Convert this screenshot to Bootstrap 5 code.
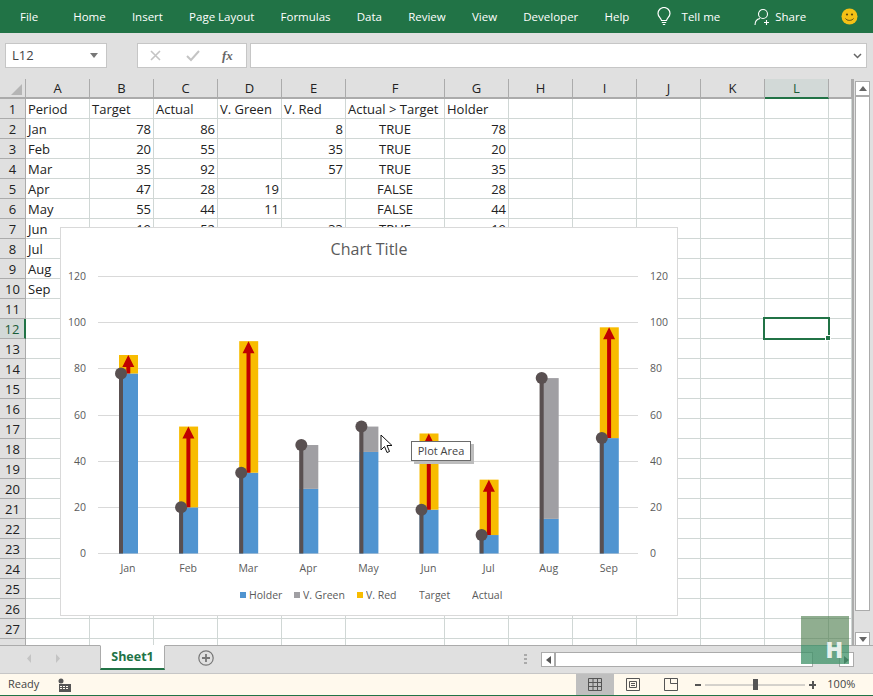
<!DOCTYPE html>
<html lang="en">
<head>
  <meta charset="UTF-8">
  <title>Excel chart</title>
  <link href="https://cdn.jsdelivr.net/npm/bootstrap@5.3.3/dist/css/bootstrap.min.css" rel="stylesheet">
  <style>
    html, body { height: 100%; }
    body { font-family: "Open Sans", "Liberation Sans", sans-serif; background: #e0e0e0; overflow: hidden; color: #222; }
    .xl-app { position: relative; width: 873px; height: 696px; }
    .xl-ribbon { height: 33px; background: #217346; color: #fff; font-size: 11.5px; padding-left: 20px; }
    .xl-ribbon span { white-space: nowrap; }
    .xl-tab { margin-right: 26.2px; }
    .xl-tab-file { margin-right: 35px; }
    .xl-tell { margin-left: 10px; margin-right: 34px; }
    .xl-smile { margin-right: 15px; }
    .xl-formula { height: 46px; background: #e0e0e0; padding: 10px 6px 11px 5px; }
    .xl-box { background: #fff; border: 1px solid #c6c6c6; height: 25px; }
    .xl-name { width: 102px; font-size: 13px; color: #444; padding-left: 6px; }
    .xl-fx { width: 110px; margin-left: 30px; margin-right: 3px; }
    .xl-sheet { height: 566px; position: relative; background: #fff; overflow: hidden; }
    .xl-grid { border-collapse: separate; border-spacing: 0; table-layout: fixed; width: 852px; font-size: 13px; margin: 0; }
    .xl-grid th, .xl-grid td { height: 20px; padding: 1px 2px 0; border-right: 1px solid #d0d7d5; border-bottom: 1px solid #d0d7d5; font-weight: 400; line-height: 18px; white-space: nowrap; overflow: hidden; color: #222; }
    .xl-grid thead th { background: #e0e0e0; text-align: center; border-right-color: #ababab; border-bottom: 2px solid #ababab; line-height: 17px; }
    .xl-grid tbody th { background: #e0e0e0; text-align: center; border-right: 1px solid #ababab; border-bottom-color: #ababab; padding: 1px 0 0; }
    .xl-grid thead th.xl-on { background: #d2d9d7; border-bottom-color: #217346; color: #1a5c38; }
    .xl-grid tbody th.xl-on { background: #d2d9d7; border-right: 2px solid #217346; color: #1a5c38; }
    .xl-grid thead th.xl-corner { position: relative; }
    .xl-corner svg { position: absolute; right: 3px; bottom: 2px; }
    .xl-mid { text-align: center; }
    .xl-num { text-align: right; }
    .xl-filler { position: absolute; top: 0; right: 0; bottom: 0; width: 21px; background: #e0e0e0; border-left: 2px solid #ababab; }
    .xl-selected { position: absolute; left: 763px; top: 238px; width: 67px; height: 23px; border: 2px solid #217346; }
    .xl-selected::after { content: ""; position: absolute; right: -3px; bottom: -3px; width: 6px; height: 6px; background: #217346; border: 1px solid #fff; }
    .xl-chart { position: absolute; left: 60px; top: 148px; width: 618px; height: 389px; background: #fff; border: 1px solid #d9d9d9; }
    .xl-chart svg { display: block; }
    .xl-chart text { font-family: "Open Sans", "Liberation Sans", sans-serif; font-size: 10.5px; fill: #595959; opacity: .99; }
    .xl-tip { position: absolute; left: 411px; top: 362px; width: 60px; height: 20px; background: #fff; border: 1px solid #6b6b6b; box-shadow: 3px 3px 0 #bdbdbd; font-size: 11px; line-height: 18px; text-align: center; color: #444; }
    .xl-pointer { position: absolute; left: 380px; top: 355px; }
    .xl-scroll { position: absolute; left: 855px; top: 2px; width: 15px; }
    .xl-scroll-btn { height: 15px; background: #fff; border: 1px solid #ababab; }
    .xl-scroll-thumb { height: 515px; background: #fff; border: 1px solid #ababab; }
    .xl-scroll-down { margin-top: 21px; height: 14px; }
    .xl-tabs { height: 29px; background: #e0e0e0; border-top: 1px solid #ababab; border-bottom: 1px solid #c6c6c6; font-size: 12.5px; }
    .xl-sheet-tab { width: 65px; height: 25px; margin-left: 36px; margin-top: -1px; background: #fff; border: 1px solid #ababab; border-top-color: #fff; border-bottom: 2px solid #217346; color: #217346; font-weight: 700; text-align: center; line-height: 22px; }
    .xl-add { margin-left: 33px; }
    .xl-dots { position: absolute; left: 524px; top: 8px; }
    .xl-hscroll { position: absolute; left: 541px; top: 6px; width: 272px; height: 15px; background: #fff; border: 1px solid #ababab; }
    .xl-hleft { width: 14px; height: 13px; border-right: 2px solid #ababab; }
    .xl-hright { position: absolute; left: 839px; top: 6px; width: 15px; height: 15px; background: #fff; border: 1px solid #ababab; }
    .xl-status { height: 22px; background: #fff9ed; border-bottom: 1px solid #217346; font-size: 11px; color: #444; padding-left: 8px; }
    .xl-macro { margin-left: 19px; }
    .xl-view { width: 38px; height: 21px; }
    .xl-view.xl-on { background: #bfbfbf; margin-left: 504px; }
    .xl-pct { margin-left: 11px; }
    .xl-mark { position: absolute; left: 801px; top: 616px; width: 48px; height: 48px; background: linear-gradient(rgba(70,120,70,.6) 29px, rgba(61,145,103,.75) 29px); color: rgba(255,255,255,.85); font: 800 23px/1 "Open Sans", sans-serif; text-align: right; padding: 22px 6px 0 0; }
  </style>
</head>
<body>
  <div class="xl-app">
    <div class="xl-ribbon d-flex align-items-center">
      <span class="xl-tab-file">File</span>
      <span class="xl-tab">Home</span>
      <span class="xl-tab">Insert</span>
      <span class="xl-tab">Page Layout</span>
      <span class="xl-tab">Formulas</span>
      <span class="xl-tab">Data</span>
      <span class="xl-tab">Review</span>
      <span class="xl-tab">View</span>
      <span class="xl-tab">Developer</span>
      <span class="xl-tab">Help</span>
      <svg width="16" height="20" viewBox="0 0 16 20" fill="none" stroke="#fff" stroke-width="1.2"><path d="M5.5 13.5C5 11 2 9.8 2 6.5a6 6 0 0 1 12 0c0 3.300-3 4.500-3.500 7z"/><path d="M5.800 15.500h4.400M6.800 17.500h2.400"/></svg>
      <span class="xl-tell">Tell me</span>
      <svg width="17" height="18" viewBox="0 0 17 18" fill="none" stroke="#fff" stroke-width="1.100"><circle cx="9" cy="6" r="4.500"/><path d="M1 17c0-4 2.500-6 5-6.500M12.500 12v5M10 14.500h5"/></svg>
      <span class="ms-1">Share</span>
      <svg class="ms-auto xl-smile" width="17" height="17" viewBox="0 0 17 17"><circle cx="8.500" cy="8.500" r="8" fill="#f5c116"/><circle cx="6" cy="6.500" r="1.100" fill="#5b4a10"/><circle cx="11" cy="6.500" r="1.100" fill="#5b4a10"/><path d="M4.500 10.500c1.500 2.500 6.500 2.500 8 0" fill="none" stroke="#5b4a10"/></svg>
    </div>

    <div class="xl-formula d-flex">
      <div class="xl-box xl-name d-flex align-items-center justify-content-between">L12
        <svg class="me-2" width="8" height="5"><path d="M0 0h8L4 5z" fill="#777"/></svg>
      </div>
      <div class="xl-box xl-fx d-flex align-items-center">
        <svg class="ms-2" width="100" height="14" viewBox="0 0 100 14" fill="none"><path d="M5 2l9 9M14 2l-9 9" stroke="#c4c4c4" stroke-width="1.600"/><path d="M41 7l4 4 8-9" stroke="#c4c4c4" stroke-width="2"/><text x="76" y="11" font-family="Liberation Serif" font-style="italic" font-weight="700" font-size="13" fill="#666">fx</text></svg>
      </div>
      <div class="xl-box flex-grow-1 d-flex align-items-center justify-content-end pe-1">
        <svg width="9" height="6" fill="none"><path d="M1 1l3.500 3.500L8 1" stroke="#666" stroke-width="1.500"/></svg>
      </div>
    </div>

    <div class="xl-sheet">
      <table class="xl-grid">
        <colgroup id="cols"></colgroup>
        <thead><tr id="head"></tr></thead>
        <tbody id="rows"></tbody>
      </table>
      <div class="xl-filler"></div>
      <div class="xl-scroll">
        <div class="xl-scroll-btn d-flex align-items-center justify-content-center"><svg width="8" height="5"><path d="M4 0l4 5H0z" fill="#666"/></svg></div>
        <div class="xl-scroll-thumb"></div>
        <div class="xl-scroll-btn xl-scroll-down d-flex align-items-center justify-content-center"><svg width="8" height="5"><path d="M0 0h8L4 5z" fill="#666"/></svg></div>
      </div>
      <div class="xl-selected"></div>
      <div class="xl-chart"><svg id="chart" width="616" height="387"></svg></div>
      <div class="xl-tip">Plot Area</div>
      <svg class="xl-pointer" width="13" height="21" viewBox="0 0 13 21"><path d="M1 1v15l3.500-3.500 2.500 6 2.500-1-2.500-6h5z" fill="#fff" stroke="#111"/></svg>
    </div>

    <div class="xl-tabs d-flex position-relative">
      <svg class="ms-4 mt-2" width="40" height="10" fill="#c4c4c4"><path d="M7 0v9L3 4.500zM32 0v9l4-4.500z"/></svg>
      <div class="xl-sheet-tab">Sheet1</div>
      <svg class="xl-add mt-1" width="16" height="16" fill="none" stroke="#777" stroke-width="1.200"><circle cx="8" cy="8" r="7.200"/><path d="M8 4v8M4 8h8" stroke-width="1.800"/></svg>
      <svg class="xl-dots" width="3" height="11" fill="#aaa"><path d="M0 0h3v2H0zM0 4h3v2H0zM0 8h3v2H0z"/></svg>
      <div class="xl-hscroll d-flex"><div class="xl-hleft d-flex align-items-center justify-content-center"><svg width="5" height="8"><path d="M5 0v8L0 4z" fill="#555"/></svg></div></div>
      <div class="xl-hright d-flex align-items-center justify-content-center"><svg width="5" height="8"><path d="M0 0v8l5-4z" fill="#555"/></svg></div>
    </div>

    <div class="xl-status d-flex align-items-center">
      <span>Ready</span>
      <svg class="xl-macro" width="14" height="14" viewBox="0 0 14 14" fill="#555"><circle cx="3" cy="3" r="2.500"/><path d="M1 6h12v8H1zM2 8v1h2V8zm3 0v1h2V8zm3 0v1h2V8zM2 10v1h2v-1zm3 0v1h2v-1zm3 0v1h2v-1z" fill-rule="evenodd"/></svg>
      <div class="xl-view xl-on d-flex align-items-center justify-content-center"><svg width="14" height="13" fill="none" stroke="#555"><path d="M.5.5h13v12H.5zM5 .5v12M9.500.5v12M.5 4.500h13M.5 8.500h13"/></svg></div>
      <div class="xl-view d-flex align-items-center justify-content-center"><svg width="14" height="13" fill="none" stroke="#555"><path d="M.5.5h13v12H.5zM3.500 3.500h7v6h-7zM5 5.500h4M5 7.500h4"/></svg></div>
      <div class="xl-view d-flex align-items-center justify-content-center"><svg width="14" height="13" fill="none" stroke="#555"><path d="M.5.5h13v12H.5zM6.500.5v5h7"/></svg></div>
      <svg class="ms-1" width="122" height="14" viewBox="0 0 122 14"><path d="M1 6h6v2H1zM118 3h2v3h2v2h-2v3h-2V8h-3V6h3z" fill="#555"/><path d="M11 7h100" stroke="#aaa"/><rect x="59" y="1" width="5" height="11" fill="#555"/></svg>
      <span class="xl-pct">100%</span>
    </div>

    <div class="xl-mark">H</div>
  </div>

  <script>
    const months = ['Jan', 'Feb', 'Mar', 'Apr', 'May', 'Jun', 'Jul', 'Aug', 'Sep'];
    const target = [78, 20, 35, 47, 55, 19, 8, 76, 50];
    const actual = [86, 55, 92, 28, 44, 52, 32, 15, 98];
    const letters = 'ABCDEFGHIJKLM'.split('');
    const widths = [64, 64, 64, 64, 64, 99, 64, 64, 64, 64, 64, 64, 23];

    let cols = '<col style="width:26px">';
    let head = '<th class="xl-corner"><svg width="11" height="11"><path d="M11 0v11H0z" fill="#b5b5b5"/></svg></th>';
    letters.forEach((l, i) => {
      cols += `<col style="width:${widths[i]}px">`;
      head += `<th class="${l === 'L' ? 'xl-on' : ''}">${l === 'M' ? '' : l}</th>`;
    });
    document.getElementById('cols').innerHTML = cols;
    document.getElementById('head').innerHTML = head;

    let rows = '';
    for (let r = 1; r <= 28; r++) {
      let c = Array(13).fill('<td></td>');
      if (r === 1) {
        ['Period', 'Target', 'Actual', 'V. Green', 'V. Red', 'Actual &gt; Target', 'Holder'].forEach((t, i) => c[i] = `<td>${t}</td>`);
      } else if (r <= 10) {
        const i = r - 2, diff = actual[i] - target[i];
        c[0] = `<td>${months[i]}</td>`;
        // rows 8 to 10 are behind the chart, only the month shows
        if (r <= 7) {
          c[1] = `<td class="xl-num">${target[i]}</td>`;
          c[2] = `<td class="xl-num">${actual[i]}</td>`;
          c[3] = `<td class="xl-num">${diff < 0 ? -diff : ''}</td>`;
          c[4] = `<td class="xl-num">${diff > 0 ? diff : ''}</td>`;
          c[5] = `<td class="xl-mid">${diff > 0 ? 'TRUE' : 'FALSE'}</td>`;
          c[6] = `<td class="xl-num">${Math.min(target[i], actual[i])}</td>`;
        }
      }
      rows += `<tr><th class="${r === 12 ? 'xl-on' : ''}">${r === 28 ? '' : r}</th>${c.join('')}</tr>`;
    }
    document.getElementById('rows').innerHTML = rows;

    // chart coordinates are relative to the chart box, which sits at 61,228
    const y = v => 325.5 - v * 2.308;
    let s = '<text x="308" y="27" text-anchor="middle" style="font-size:16px">Chart Title</text>';
    for (let v = 0; v <= 120; v += 20) {
      const ly = Math.floor(y(v)) + 0.5;
      s += `<path d="M37 ${ly}H577" stroke="#d9d9d9"/>`;
      s += `<text x="25" y="${ly + 3.5}" text-anchor="end">${v}</text>`;
      s += `<text x="589" y="${ly + 3.5}">${v}</text>`;
    }
    months.forEach((m, i) => {
      const c = 67 + i * 60.1, t = target[i], a = actual[i], low = Math.min(t, a), top = Math.max(t, a);
      s += `<rect x="${c - 9}" y="${y(low)}" width="19" height="${low * 2.308}" fill="#5094d0"/>`;
      s += `<rect x="${c - 9}" y="${y(top)}" width="19" height="${(top - low) * 2.308}" fill="${a > t ? '#f8bc00' : '#a09fa3'}"/>`;
      if (a > t) {
        s += `<path d="M${c - 1.7} ${y(t)}V${y(a) + 12}h-4l6 -12 6 12h-4V${y(t)}z" fill="#c00000"/>`;
      }
      s += `<rect x="${c - 9}" y="${y(t)}" width="4" height="${t * 2.308}" fill="#595051"/>`;
      s += `<circle cx="${c - 7}" cy="${y(t)}" r="6" fill="#595051"/>`;
      s += `<text x="${c}" y="344" text-anchor="middle">${m}</text>`;
    });
    const legend = [['Holder', 179, '#5094d0'], ['V. Green', 233, '#a09fa3'], ['V. Red', 296, '#f8bc00'], ['Target', 358], ['Actual', 411]];
    legend.forEach(([t, x, col]) => {
      if (col) s += `<rect x="${x}" y="364" width="6" height="6" fill="${col}"/>`;
      s += `<text x="${x + (col ? 9 : 0)}" y="371">${t}</text>`;
    });
    document.getElementById('chart').innerHTML = s;
  </script>
  <script src="https://cdn.jsdelivr.net/npm/bootstrap@5.3.3/dist/js/bootstrap.bundle.min.js"></script>
</body>
</html>
